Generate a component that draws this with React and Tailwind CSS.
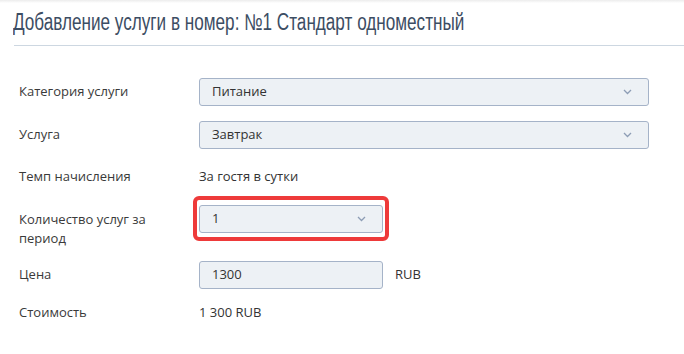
import React from 'react'

function Chevron() {
    return (
        <svg width="9" height="6" viewBox="0 0 9 6" className="shrink-0">
            <path d="M1 1l3.5 3.5L8 1" fill="none" stroke="#8d9db5" strokeWidth="1.3" />
        </svg>
    )
}

function Select({ value, className }) {
    return (
        <div
            className={`flex h-[28px] items-center justify-between rounded-[3px] border border-[#a5b3c8] bg-[#edf1f5] pl-[12px] pr-[16px] text-[13px] text-[#333] ${className}`}
        >
            <span>{value}</span>
            <Chevron />
        </div>
    )
}

function Row({ label, children, className = '', labelClass = '' }) {
    return (
        <div className={`flex ${className}`}>
            <div className={`w-[180px] shrink-0 pl-[19px] text-[13px] text-[#3a3a3a] ${labelClass}`}>{label}</div>
            <div className="flex flex-1 items-center">{children}</div>
        </div>
    )
}

export default function App() {
    return (
        <div
            className="h-[354px] w-[684px] overflow-hidden bg-white"
            style={{ fontFamily: '"Open Sans", "Noto Sans", sans-serif' }}
        >
            <div className="h-[3px] bg-gradient-to-b from-[#ececec] to-white" />
            <div className="ml-[14px] border-b border-[#cdd7e1] pb-[10px] pt-[6px]">
                <h1
                    className="-ml-[1px] origin-left scale-x-[0.745] whitespace-nowrap text-[23px] leading-[26px] text-[#3c4d63]"
                    style={{ fontFamily: '"Liberation Sans", Arial, sans-serif' }}
                >
                    Добавление услуги в номер: №1 Стандарт одноместный
                </h1>
            </div>

            <div className="pt-[32px]">
                <Row label="Категория услуги" className="h-[28px] items-center">
                    <Select value="Питание" className="ml-[19px] w-[450px]" />
                </Row>
                <Row label="Услуга" className="mt-[15px] h-[28px] items-center">
                    <Select value="Завтрак" className="ml-[19px] w-[450px]" />
                </Row>
                <Row label="Темп начисления" className="mt-[14px] h-[28px] items-center">
                    <span className="ml-[19px] text-[13px] text-[#333]">За гостя в сутки</span>
                </Row>
                <Row
                    label={<span className="block w-[150px]">Количество услуг за период</span>}
                    className="mt-[14px] items-start"
                    labelClass="pt-[5px] leading-[19px]"
                >
                    <div className="relative ml-[19px]">
                        <Select value="1" className="w-[184px]" />
                        <div className="pointer-events-none absolute -bottom-[8px] -left-[6px] -right-[6px] -top-[9px] rounded-[6px] border-4 border-[#ee3a3a]" />
                    </div>
                </Row>
                <Row label="Цена" className="mt-[13px] h-[28px] items-center">
                    <div className="ml-[19px] flex h-[28px] w-[184px] items-center rounded-[3px] border border-[#a5b3c8] bg-[#edf1f5] pl-[12px] text-[13px] text-[#333]">
                        1300
                    </div>
                    <span className="ml-[12px] text-[13px] text-[#333]">RUB</span>
                </Row>
                <Row label="Стоимость" className="mt-[10px] h-[28px] items-center">
                    <span className="ml-[19px] text-[13px] text-[#333]">1 300 RUB</span>
                </Row>
            </div>
        </div>
    )
}
